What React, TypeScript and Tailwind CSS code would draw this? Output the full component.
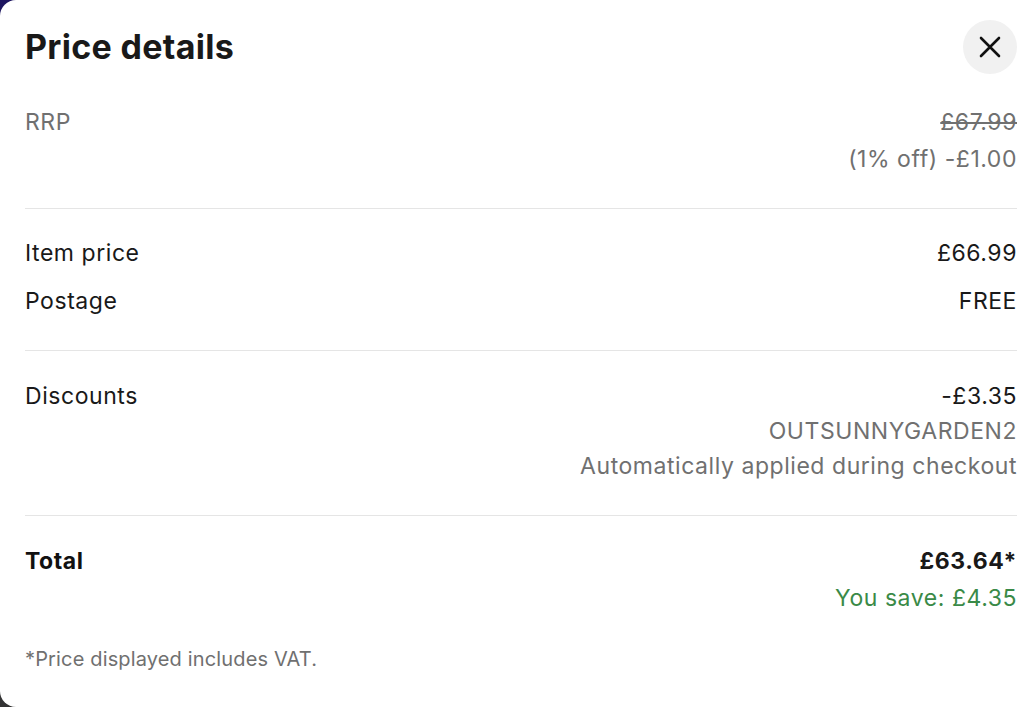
type Line = { text: string; tone?: "dark" | "muted" | "green" | "strike"; bold?: boolean }

function Row({ label, bold, lines, gap = "gap-[7px]" }: { label: string; bold?: boolean; lines: Line[]; gap?: string }) {
  return (
    <div className="flex justify-between items-start">
      <span className={`${bold ? "font-bold text-[#111]" : ""} ${label === "RRP" ? "text-[#707070]" : ""}`}>{label}</span>
      <div className={`flex flex-col items-end ${gap}`}>
        {lines.map((l) => (
          <span
            key={l.text}
            className={
              l.tone === "muted"
                ? "text-[#707070]"
                : l.tone === "strike"
                  ? "text-[#707070] line-through"
                  : l.tone === "green"
                    ? "text-[#3a8a47]"
                    : "text-[#191919]"
            }
            style={l.bold ? { fontWeight: 700 } : undefined}
          >
            {l.text}
          </span>
        ))}
      </div>
    </div>
  )
}

export default function App() {
  return (
    <div className="w-[1024px] h-[707px] bg-gradient-to-b from-[#1d1560] to-[#333]">
      <div
        className="w-full h-full bg-white rounded-tl-[16px] rounded-bl-[16px] pl-[25px] pr-[7px] text-[23px] leading-[30px] tracking-[0.55px] text-[#191919] flex flex-col"
        style={{ fontFamily: "Inter, 'Liberation Sans', sans-serif" }}
      >
        <div className="flex justify-between items-center pt-[20px]">
          <h1 className="text-[34px] leading-[54px] font-bold tracking-[0.3px]">Price details</h1>
          <button className="w-[54px] h-[54px] rounded-full bg-[#f1f1f1] flex items-center justify-center">
            <svg width="22" height="22" viewBox="0 0 22 22" fill="none" stroke="#111" strokeWidth="2.6" strokeLinecap="round">
              <path d="M2 2L20 20M20 2L2 20" />
            </svg>
          </button>
        </div>

        <div className="pt-[33px] pb-[34px] border-b border-[#e5e5e5]">
          <Row label="RRP" lines={[{ text: "£67.99", tone: "strike" }, { text: "(1% off) -£1.00", tone: "muted" }]} />
        </div>

        <div className="pt-[29px] pb-[34px] border-b border-[#e5e5e5] flex flex-col gap-[18px]">
          <Row label="Item price" lines={[{ text: "£66.99" }]} />
          <Row label="Postage" lines={[{ text: "FREE" }]} />
        </div>

        <div className="pt-[30px] pb-[34px] border-b border-[#e5e5e5]">
          <Row
            label="Discounts"
            gap="gap-[5px]"
            lines={[
              { text: "-£3.35" },
              { text: "OUTSUNNYGARDEN2", tone: "muted" },
              { text: "Automatically applied during checkout", tone: "muted" },
            ]}
          />
        </div>

        <div className="pt-[30px]">
          <Row label="Total" bold lines={[{ text: "£63.64*", bold: true }, { text: "You save: £4.35", tone: "green" }]} />
        </div>

        <p className="mt-[31px] text-[20px] tracking-[0.15px] text-[#707070]">*Price displayed includes VAT.</p>
      </div>
    </div>
  )
}
